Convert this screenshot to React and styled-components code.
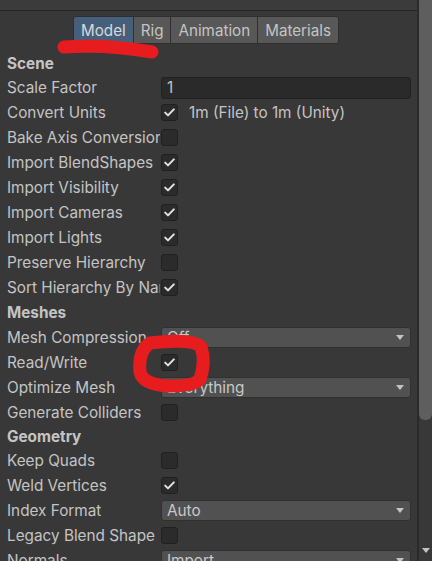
import React from 'react';
import styled, { createGlobalStyle } from 'styled-components';

const GlobalStyle = createGlobalStyle`
  html, body { margin: 0; padding: 0; background: #383838; }
  body { font-family: Inter, "Noto Sans", sans-serif; }
`

const Window = styled.div`
  position: relative;
  width: 432px;
  height: 561px;
  overflow: hidden;
  display: flex;
  background: #383838;
`
const Panel = styled.div`
  width: 417px;
  display: flex;
  flex-direction: column;
`
const TopStrip = styled.div`
  height: 10px;
  flex: none;
  background: #3b3b3b;
  border-bottom: 1px solid #242424;
`
const TabBar = styled.div`
  display: flex;
  justify-content: center;
  padding: 5px 5px 0 0;
  margin-bottom: 7px;
`
const TabGroup = styled.div`
  display: flex;
  border: 1px solid #2f2f2f;
  border-radius: 3px;
  overflow: hidden;
`
const Tab = styled.div`
  height: 26px;
  padding: 0 7px;
  display: flex;
  align-items: center;
  font-size: 15.2px;
  color: ${p => p.$active ? '#d8d8d8' : '#c4c4c4'};
  background: ${p => p.$active ? '#46607c' : '#585858'};
  & + & { border-left: 1px solid #2f2f2f; }
`
const Fields = styled.div`
  display: flex;
  flex-direction: column;
  padding: 0 6px 0 7px;
`
const Row = styled.div`
  height: ${p => p.$h || 25}px;
  flex: none;
  display: flex;
  align-items: center;
`
const Header = styled.div`
  font-size: 15.3px;
  font-weight: 700;
  color: #c4c4c4;
`
const Label = styled.span`
  width: 153px;
  flex: none;
  margin-right: 1px;
  overflow: hidden;
  white-space: nowrap;
  font-size: 15.3px;
  color: #c4c4c4;
`
const Box = styled.div`
  width: 17px;
  height: 17px;
  box-sizing: border-box;
  flex: none;
  background: #2b2b2b;
  border: 1px solid #202020;
  border-radius: 3px;
  display: flex;
  align-items: center;
  justify-content: center;
`
const Note = styled.span`
  margin-left: 11px;
  font-size: 15.3px;
  color: #c4c4c4;
  white-space: nowrap;
`
const TextField = styled.div`
  flex: 1;
  height: 22px;
  box-sizing: border-box;
  background: #2a2a2a;
  border: 1px solid #212121;
  border-radius: 3px;
  padding-left: 5px;
  display: flex;
  align-items: center;
  font-size: 15.3px;
  color: #c4c4c4;
`
const Dropdown = styled.div`
  flex: 1;
  height: 21px;
  box-sizing: border-box;
  background: #515151;
  border: 1px solid #303030;
  border-radius: 3px;
  padding: 0 6px 0 5px;
  display: flex;
  align-items: center;
  justify-content: space-between;
  font-size: 15.3px;
  color: #c8c8c8;
`
const Arrow = styled.span`
  width: 0;
  height: 0;
  border-left: 4.5px solid transparent;
  border-right: 4.5px solid transparent;
  border-top: 5.5px solid #c4c4c4;
`
const Scrollbar = styled.div`
  width: 13px;
  border-left: 2px solid #2a2a2a;
  display: flex;
  flex-direction: column;
  align-items: center;
`
const Thumb = styled.div`
  width: 13px;
  height: 420px;
  background: #5e5e5e;
  border-radius: 0 0 6px 6px;
`
const ScrollArrow = styled(Arrow)`
  margin-top: auto;
  margin-bottom: 8px;
`
const Marks = styled.svg`
  position: absolute;
  left: 0;
  top: 0;
  pointer-events: none;
`

const Check = () => (
  <svg width="11" height="9" viewBox="0 0 11 9">
    <path d="M1.2 4.6 L4 7.4 L9.8 1.4" fill="none" stroke="#e2e2e2" strokeWidth="2" strokeLinecap="round" strokeLinejoin="round" />
  </svg>
)

const Toggle = ({label, on, note}) => (
  <Row>
    <Label>{label}</Label>
    <Box>{on && <Check />}</Box>
    {note && <Note>{note}</Note>}
  </Row>
)

const Select = ({label, value}) => (
  <Row>
    <Label>{label}</Label>
    <Dropdown>{value}<Arrow /></Dropdown>
  </Row>
)

export default function App() {
  return (
    <Window>
      <GlobalStyle />
      <Panel>
        <TopStrip />
        <TabBar>
          <TabGroup>
            <Tab $active>Model</Tab>
            <Tab>Rig</Tab>
            <Tab>Animation</Tab>
            <Tab>Materials</Tab>
          </TabGroup>
        </TabBar>
        <Fields>
          <Row $h={24}><Header>Scene</Header></Row>
          <Row>
            <Label>Scale Factor</Label>
            <TextField>1</TextField>
          </Row>
          <Toggle label="Convert Units" on note="1m (File) to 1m (Unity)" />
          <Toggle label="Bake Axis Conversion" />
          <Toggle label="Import BlendShapes" on />
          <Toggle label="Import Visibility" on />
          <Toggle label="Import Cameras" on />
          <Toggle label="Import Lights" on />
          <Toggle label="Preserve Hierarchy" />
          <Toggle label="Sort Hierarchy By Name" on />
          <Row $h={25}><Header>Meshes</Header></Row>
          <Select label="Mesh Compression" value="Off" />
          <Toggle label="Read/Write" on />
          <Select label="Optimize Mesh" value="Everything" />
          <Toggle label="Generate Colliders" />
          <Row $h={23}><Header>Geometry</Header></Row>
          <Toggle label="Keep Quads" />
          <Toggle label="Weld Vertices" on />
          <Select label="Index Format" value="Auto" />
          <Toggle label="Legacy Blend Shape Normals" />
          <Select label="Normals" value="Import" />
        </Fields>
      </Panel>
      <Scrollbar>
        <Thumb />
        <ScrollArrow />
      </Scrollbar>
      <Marks width="432" height="561" viewBox="0 0 432 561">
        <path d="M64 47 Q106 44 152 52" fill="none" stroke="#e61c1f" strokeWidth="13" strokeLinecap="round" />
        <path d="M150 343 Q194 338 201 347 Q206 362 200 379 Q195 386 170 386 Q143 385 140 372 Q138 351 150 343 Z" fill="none" stroke="#e61c1f" strokeWidth="13" strokeLinejoin="round" />
      </Marks>
    </Window>
  );
}
